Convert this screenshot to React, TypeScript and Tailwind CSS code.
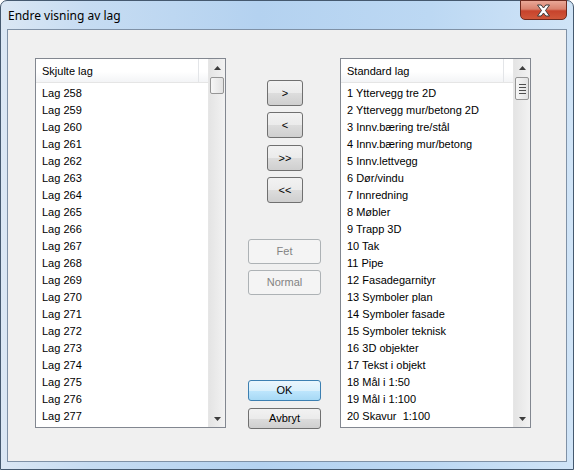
import React from "react";

const hidden = Array.from({ length: 20 }, (_, i) => `Lag ${258 + i}`);

const standard = [
  "1 Yttervegg tre 2D",
  "2 Yttervegg mur/betong 2D",
  "3 Innv.bæring tre/stål",
  "4 Innv.bæring mur/betong",
  "5 Innv.lettvegg",
  "6 Dør/vindu",
  "7 Innredning",
  "8 Møbler",
  "9 Trapp 3D",
  "10 Tak",
  "11 Pipe",
  "12 Fasadegarnityr",
  "13 Symboler plan",
  "14 Symboler fasade",
  "15 Symboler teknisk",
  "16 3D objekter",
  "17 Tekst i objekt",
  "18 Mål i 1:50",
  "19 Mål i 1:100",
  "20 Skavur  1:100",
];

function ScrollBar({ grip }: { grip?: boolean }) {
  return (
    <div className="flex w-[17px] flex-col border-l border-[#e6e6e6] bg-[linear-gradient(to_right,#e4e4e4,#f2f2f2)]">
      <div className="flex h-[17px] items-center justify-center">
        <svg width="7" height="4" viewBox="0 0 7 4">
          <path d="M0 4 L3.5 0 L7 4 Z" fill="#3d3d3d" />
        </svg>
      </div>
      <div
        className={`mx-px mt-[1px] flex flex-col items-center justify-center gap-[2px] rounded-[2px] border border-[#959595] bg-[linear-gradient(to_right,#f6f6f6,#e2e2e2)] ${
          grip ? "h-[23px]" : "h-[17px]"
        }`}
      >
        {grip && (
          <>
            <div className="h-px w-[7px] bg-[#4d4d4d]" />
            <div className="h-px w-[7px] bg-[#4d4d4d]" />
            <div className="h-px w-[7px] bg-[#4d4d4d]" />
            <div className="h-px w-[7px] bg-[#4d4d4d]" />
          </>
        )}
      </div>
      <div className="flex-1" />
      <div className="flex h-[17px] items-center justify-center">
        <svg width="7" height="4" viewBox="0 0 7 4">
          <path d="M0 0 L3.5 4 L7 0 Z" fill="#3d3d3d" />
        </svg>
      </div>
    </div>
  );
}

function ListBox({ title, items, grip }: { title: string; items: string[]; grip?: boolean }) {
  return (
    <div className="flex h-[370px] w-[191px] border border-[#828790] bg-white">
      <div className="flex min-w-0 flex-1 flex-col overflow-hidden">
        <div className="flex h-[24px] shrink-0 border-b border-[#e5e5e5] bg-[linear-gradient(to_bottom,#ffffff_55%,#f3f4f6)]">
          <div className="flex flex-1 items-center pl-[6px] pt-[2px]">{title}</div>
          <div className="w-[10px] border-l border-[#e3e5e8]" />
        </div>
        <div className="flex flex-col pt-[2px]">
          {items.map((t) => (
            <div key={t} className="flex h-[17px] shrink-0 items-center whitespace-pre pl-[6px]">
              {t}
            </div>
          ))}
        </div>
      </div>
      <ScrollBar grip={grip} />
    </div>
  );
}

function Btn({
  children,
  className,
  disabled,
  def,
}: {
  children: React.ReactNode;
  className: string;
  disabled?: boolean;
  def?: boolean;
}) {
  const look = disabled
    ? "border-[#adb2b5] bg-[#f4f4f4] text-[#838383]"
    : def
    ? "border-[#3c7fb1] bg-[linear-gradient(to_bottom,#eaf6fd_0%,#d9f0fc_50%,#bee6fd_50%,#a7d9f5_100%)] text-black"
    : "border-[#707070] bg-[linear-gradient(to_bottom,#f2f2f2_0%,#ebebeb_50%,#dddddd_50%,#cfcfcf_100%)] text-black";
  return (
    <div className={`flex items-center justify-center rounded-[3px] border ${look} ${className}`}>
      {children}
    </div>
  );
}

export default function App() {
  return (
    <div className="h-[470px] w-[574px] bg-white">
      <div
        className="flex h-[470px] w-[574px] flex-col rounded-t-[7px] border border-[#45596f] bg-[linear-gradient(to_right,#dbe7f4_0%,#c6dcf2_15%,#b4d2f0_45%,#bcd8f3_75%,#d0e4f7_100%)] px-[6px] pb-[7px]"
        style={{ fontFamily: '"Liberation Sans", Arial, sans-serif' }}
      >
        <div className="flex h-[28px] shrink-0 items-start justify-between">
          <div
            className="pl-px pt-[7px] text-[12px] leading-[16px] text-black"
            style={{ fontFamily: '"Noto Sans", sans-serif' }}
          >
            Endre visning av lag
          </div>
          <div className="-mt-px flex h-[20px] w-[47px] items-center justify-center rounded-b-[5px] border border-[#6e2a1f] bg-[linear-gradient(to_bottom,#e9a797_0%,#d9826e_45%,#c7432c_55%,#d0573a_100%)]">
            <svg width="15" height="13" viewBox="0 0 15 13">
              <path
                d="M1.5 1 L5.2 1 L7.5 4 L9.8 1 L13.5 1 L9.5 6.5 L13.5 12 L9.8 12 L7.5 9 L5.2 12 L1.5 12 L5.5 6.5 Z"
                fill="#ffffff"
                stroke="#3b3b3b"
                strokeWidth="1"
                strokeLinejoin="round"
              />
            </svg>
          </div>
        </div>
        <div className="flex flex-1 items-start border border-[#7f91a6] bg-[#f0f0f0] pl-[27px] pt-[28px] text-[11px] text-black">
          <ListBox title="Skjulte lag" items={hidden} />
          <div className="flex w-[114px] flex-col">
            <Btn className="ml-[41px] mt-[22px] h-[26px] w-[36px]">&gt;</Btn>
            <Btn className="ml-[41px] mt-[6px] h-[26px] w-[36px]">&lt;</Btn>
            <Btn className="ml-[41px] mt-[7px] h-[26px] w-[36px]">&gt;&gt;</Btn>
            <Btn className="ml-[41px] mt-[6px] h-[26px] w-[36px]">&lt;&lt;</Btn>
            <Btn disabled className="ml-[22px] mt-[36px] h-[25px] w-[73px]">
              Fet
            </Btn>
            <Btn disabled className="ml-[22px] mt-[6px] h-[25px] w-[73px]">
              Normal
            </Btn>
            <Btn def className="ml-[22px] mt-[85px] h-[21px] w-[73px]">
              OK
            </Btn>
            <Btn className="ml-[22px] mt-[7px] h-[21px] w-[73px]">Avbryt</Btn>
          </div>
          <ListBox title="Standard lag" items={standard} grip />
        </div>
      </div>
    </div>
  );
}
